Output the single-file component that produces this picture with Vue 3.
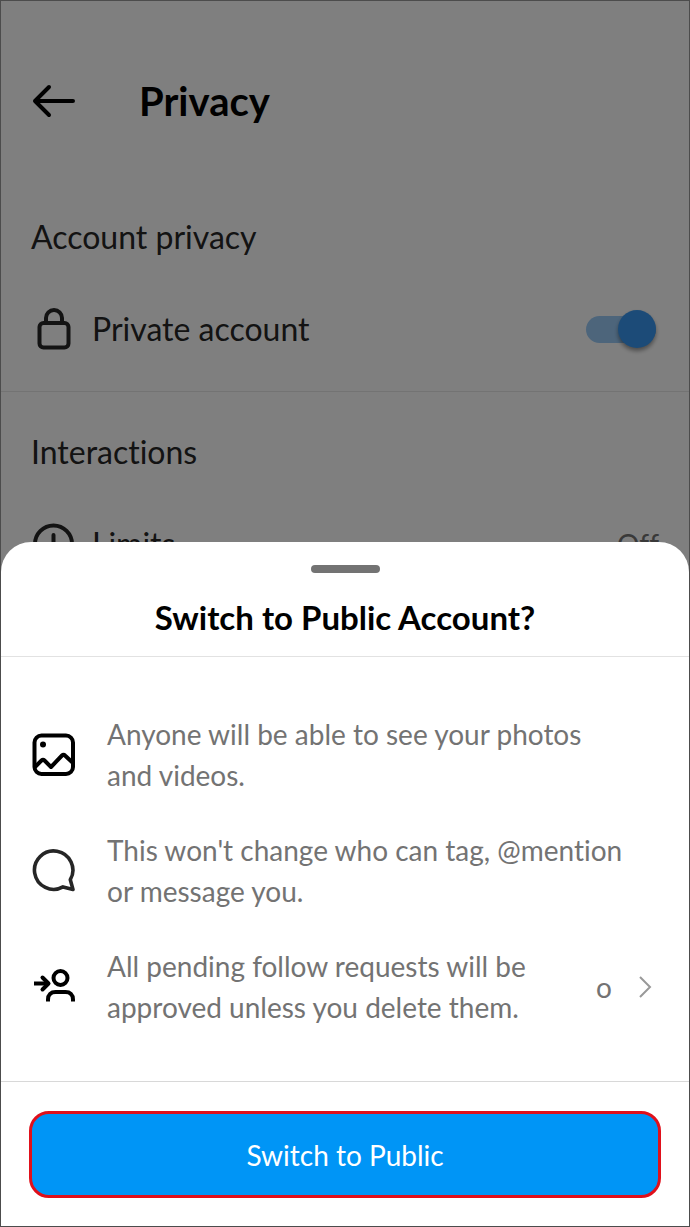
<script setup>
import { ref } from 'vue'

const isPrivate = ref(true)
const notes = [
  { icon: 'photo', text: 'Anyone will be able to see your photos and videos.' },
  { icon: 'chat', text: "This won't change who can tag, @mention or message you." },
  { icon: 'follow', text: 'All pending follow requests will be approved unless you delete them.', count: 'o' }
]
</script>

<template>
  <div class="screen">
    <main class="page">
      <header class="bar">
        <button class="back" type="button" aria-label="Back">
          <svg width="44" height="34" viewBox="0 0 44 34" fill="none" stroke="#000" stroke-width="4" stroke-linecap="round" stroke-linejoin="round">
            <path d="M42 17H4M18 3L4 17l14 14" />
          </svg>
        </button>
        <h1>Privacy</h1>
      </header>

      <section class="group">
        <h2>Account privacy</h2>
        <div class="setting">
          <svg class="icon" width="44" height="44" viewBox="0 0 44 44" fill="none" stroke="#262626" stroke-width="4">
            <rect x="8.500" y="16" width="29" height="24.500" rx="4" />
            <path d="M15 16v-5a8 8 0 0 1 16 0v5" />
          </svg>
          <label for="private">Private account</label>
          <input id="private" v-model="isPrivate" class="toggle" type="checkbox" role="switch" />
        </div>
      </section>

      <section class="group">
        <h2>Interactions</h2>
        <a class="setting" href="#limits">
          <svg class="icon" width="44" height="44" viewBox="0 0 44 44" fill="none" stroke="#262626" stroke-width="4" stroke-linecap="round">
            <circle cx="22.500" cy="22" r="18.500" />
            <path d="M22.500 13v11M22.500 31v1" />
          </svg>
          <span>Limits</span>
          <span class="state">Off</span>
        </a>
      </section>
    </main>

    <div class="backdrop"></div>

    <div class="sheet" role="dialog" aria-labelledby="sheet-title">
      <div class="head">
        <div class="handle"></div>
        <h2 id="sheet-title">Switch to Public Account?</h2>
      </div>

      <ul class="notes">
        <li v-for="note in notes" :key="note.icon">
          <svg v-if="note.icon === 'photo'" class="icon" width="44" height="44" viewBox="0 0 44 44" fill="none" stroke="#000" stroke-width="4" stroke-linejoin="round">
            <rect x="3.500" y="2.500" width="38.500" height="38.500" rx="7" />
            <circle cx="12" cy="11.500" r="3" fill="#000" stroke="none" />
            <path d="M4 34l6.500-6.500c1-1 2-1 3 0L20 34l11-11.500c1-1 2-1 3 0l8 7.500" />
          </svg>
          <svg v-else-if="note.icon === 'chat'" class="icon" width="44" height="44" viewBox="0 0 44 44" fill="none" stroke="#262626" stroke-width="3.600" stroke-linejoin="round">
            <path d="M39.300 30.700A19.200 19.200 0 1 0 32 37.900L42 40.500Z" />
          </svg>
          <svg v-else class="icon" width="44" height="44" viewBox="0 0 44 44" fill="none" stroke="#000" stroke-width="4" stroke-linecap="butt" stroke-linejoin="round">
            <circle cx="29.500" cy="13" r="7" />
            <path d="M17 36.500v-2c0-5 3-7.500 7.500-7.500h10c4.500 0 7.500 2.500 7.500 7.500v2" />
            <path d="M3 18.500h14" />
            <path d="M11.500 12.500l6 6-6 6" stroke-linecap="round" />
          </svg>
          <p>{{ note.text }}</p>
          <a v-if="note.count" class="more" href="#requests" aria-label="Follow requests">
            <span>{{ note.count }}</span>
            <svg width="14" height="24" viewBox="0 0 14 24" fill="none" stroke="#999" stroke-width="2">
              <path d="M2 2l10 10L2 22" />
            </svg>
          </a>
        </li>
      </ul>

      <footer>
        <button class="primary" type="button">Switch to Public</button>
      </footer>
    </div>
  </div>
</template>

<style>
body {
  margin: 0;
}
</style>

<style scoped>
.screen {
  position: relative;
  box-sizing: border-box;
  min-height: 100vh;
  border: 1px solid #4c4c4c;
  background: #fff;
  color: #262626;
  font-family: Lato, "Open Sans", sans-serif;
  font-size: 28px;
  font-variant-ligatures: none;
  line-height: 40px;
  overflow: hidden;
}

h1,
h2,
p,
ul {
  margin: 0;
  padding: 0;
}

h2 {
  font-size: 32px;
  font-weight: 400;
}

button {
  font: inherit;
  cursor: pointer;
}

.icon {
  flex: none;
}

.bar {
  display: flex;
  align-items: center;
  gap: 64px;
  padding: 72px 30px 0;
  height: 56px;
}

.bar h1 {
  color: #000;
  font-size: 40px;
  font-weight: 700;
  line-height: 56px;
}

.back {
  display: flex;
  padding: 0;
  border: 0;
  background: none;
}

.group {
  padding: 40px 30px 38px;
  border-bottom: 1px solid #e6e6e6;
}

.bar + .group {
  padding-top: 88px;
}

.setting {
  display: flex;
  align-items: center;
  gap: 17px;
  margin-top: 48px;
  color: inherit;
  font-size: 32px;
  line-height: 48px;
  text-decoration: none;
}

.toggle {
  position: relative;
  appearance: none;
  width: 70px;
  height: 27px;
  margin: 0 3px 0 auto;
  border-radius: 14px;
  background: #9bcbf7;
  cursor: pointer;
}

.toggle::after {
  content: "";
  position: absolute;
  top: -6px;
  left: 0;
  width: 38px;
  height: 38px;
  border-radius: 50%;
  background: #3897f0;
  box-shadow: 0 3px 4px rgba(0, 0, 0, 0.4);
}

.toggle:checked::after {
  left: auto;
  right: 0;
}

.state {
  margin-left: auto;
  color: #737373;
  font-size: 28px;
}

.backdrop {
  position: absolute;
  inset: 0;
  background: rgba(0, 0, 0, 0.5);
}

.sheet {
  position: absolute;
  right: 0;
  bottom: 0;
  left: 0;
  border-radius: 30px 30px 0 0;
  background: #fff;
}

.head {
  display: flex;
  flex-direction: column;
  align-items: center;
  gap: 24px;
  padding: 23px 30px 19px;
  border-bottom: 1px solid #e2e2e2;
  color: #000;
}

.head h2 {
  font-size: 33px;
  font-weight: 700;
}

.handle {
  width: 69px;
  height: 8px;
  border-radius: 4px;
  background: #737373;
}

.notes {
  display: flex;
  flex-direction: column;
  gap: 34px;
  padding: 57px 30px 53px;
  list-style: none;
  color: #737373;
  line-height: 41px;
}

.notes li {
  display: flex;
  align-items: center;
  gap: 32px;
}

.notes p {
  flex: 1;
  max-width: 520px;
}

.more {
  display: flex;
  align-items: center;
  gap: 26px;
  padding: 0 7px 0 20px;
  color: inherit;
  text-decoration: none;
}

footer {
  padding: 29px 28px 28px;
  border-top: 1px solid #d8d8d8;
}

.primary {
  width: 100%;
  height: 87px;
  border: 3px solid #e0101b;
  border-radius: 20px;
  background: #0095f6;
  color: #fff;
}
</style>
